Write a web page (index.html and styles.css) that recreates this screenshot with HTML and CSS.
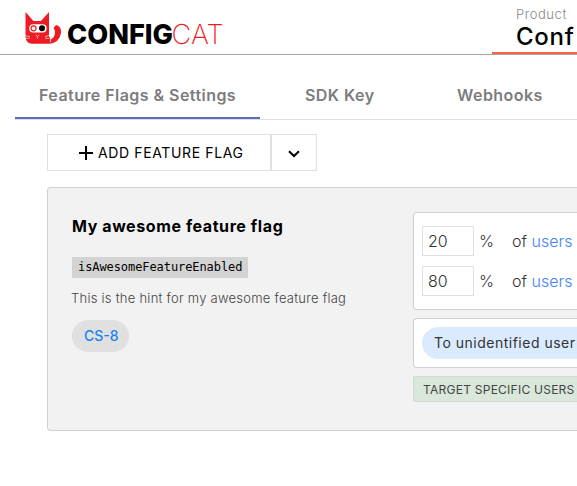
FILE: index.html
```html
<!DOCTYPE html>
<html lang="en">
<head>
<meta charset="utf-8">
<title>ConfigCat</title>
<link rel="stylesheet" href="styles.css">
</head>
<body>
<header class="header">
  <svg class="logo" width="200" height="40" viewBox="0 0 200 40">
    <path d="M0.5 4 L8.5 13 H16 L24 4 V28 L25.5 31.5 L24.5 35.7 H7 Q1 35.5 0.5 29 Z" fill="#ed1c24"/>
    <path d="M31 17 Q36.5 18 36 25 Q34.5 35 24 35.7 L25.5 31.3 Q29.5 30 30 25 Q30.2 22 28.5 20 Z" fill="#ed1c24"/>
    <path d="M24.6 27.5 Q26.6 30 25.4 34" fill="none" stroke="#fff" stroke-width=".8"/>
    <rect x="4.2" y="16.2" width="17.4" height="8.2" rx="4" fill="#fff"/>
    <circle cx="8.6" cy="20.3" r="2.5" fill="#fff" stroke="#ed1c24" stroke-width="1.2"/>
    <circle cx="17" cy="20.3" r="3" fill="#000"/>
    <path d="M10.6 27 L12.4 28.5 L14.2 27 M12.4 28.5 V30.5 M0 27.5 L5 28.6 M0 30.5 L5 30 M24 27.5 L20 28.6 M24 30.5 L20 30" fill="none" stroke="#fff" stroke-opacity=".75" stroke-width=".8"/>
    <text class="logo-config" x="42" y="35.6" textLength="106" lengthAdjust="spacingAndGlyphs">CONFIG</text>
    <text class="logo-cat" x="146.5" y="35.6" textLength="52" lengthAdjust="spacingAndGlyphs">CAT</text>
  </svg>
  <div class="product">
    <div class="product-label">Product</div>
    <div class="product-name">Conf</div>
  </div>
</header>
<nav class="tabs">
  <a class="tab tab-active">Feature Flags &amp; Settings</a>
  <a class="tab tab-sdk">SDK Key</a>
  <a class="tab tab-hooks">Webhooks</a>
</nav>
<main class="content">
  <div class="toolbar">
    <button class="button add">
      <svg width="14" height="14" viewBox="0 0 14 14"><path d="M7 0V14M0 7H14" stroke="#000" stroke-width="2"/></svg>
      <span>ADD FEATURE FLAG</span>
    </button>
    <button class="button more">
      <svg width="12" height="8" viewBox="0 0 12 8"><path d="M1 1.2L6 6L11 1.2" fill="none" stroke="#000" stroke-width="2"/></svg>
    </button>
  </div>
  <section class="card">
    <div class="details">
      <h2 class="title">My awesome feature flag</h2>
      <code class="key">isAwesomeFeatureEnabled</code>
      <p class="hint">This is the hint for my awesome feature flag</p>
      <a class="tag">CS-8</a>
    </div>
    <div class="rules">
      <div class="panel percents">
        <div class="row"><span class="field">20</span><span class="unit">%</span><span class="of">of <a class="link">users</a></span></div>
        <div class="row"><span class="field">80</span><span class="unit">%</span><span class="of">of <a class="link">users</a></span></div>
      </div>
      <div class="panel rest"><div class="pill">To unidentified user</div></div>
      <div class="target">TARGET SPECIFIC USERS</div>
    </div>
  </section>
</main>
</body>
</html>
```
FILE: styles.css
```css
* { box-sizing: border-box; }
body { margin: 0; background: #fff; color: #000; font-family: Inter, sans-serif; width: 577px; height: 486px; overflow: hidden; white-space: nowrap; }
.header { display: flex; height: 55px; border-bottom: 1px solid #a6a6a6; }
.logo { margin: 8px 0 0 25px; flex: none; overflow: visible; }
.logo-config { font: 800 27.5px Inter, sans-serif; fill: #000; }
.logo-cat { font: 200 27.5px Inter, sans-serif; fill: #ed1c24; }
.product { margin-left: 267px; padding: 7px 0 0 24px; width: 85px; height: 54px; flex: none; border-bottom: 2px solid #ff6347; }
.product-label { font-size: 13px; line-height: 15px; font-weight: 300; color: #888; letter-spacing: .55px; }
.product-name { font-size: 24px; line-height: 29px; font-weight: 550; letter-spacing: .7px; }
.tabs { display: flex; margin: 17px 0 0 15px; height: 48px; border-bottom: 1px solid #e0e0e0; }
.tab { height: 47px; line-height: 46px; font-size: 16px; font-weight: 600; color: #7c7c7c; letter-spacing: .45px; flex: none; }
.tab-active { width: 245px; padding-left: 24px; border-bottom: 2px solid #5c6bc0; }
.tab-sdk { width: 158px; padding-left: 45px; }
.tab-hooks { padding-left: 39px; }
.content { padding: 14px 0 0 47px; }
.toolbar { display: flex; }
.button { display: flex; align-items: center; height: 37px; background: #fff; border: 1px solid #e0e0e0; font: 400 14px Inter, sans-serif; color: #000; padding: 0; }
.add { width: 224px; padding-left: 31px; gap: 5px; letter-spacing: .63px; }
.more { width: 46px; justify-content: center; padding-top: 2px; }
.card { display: flex; margin-top: 16px; width: 530px; height: 244px; background: #f2f2f2; border: 1px solid #d0d0d0; border-right: 0; border-radius: 4px 0 0 4px; }
.details { width: 365px; padding: 28px 0 0 24px; flex: none; }
.title { margin: 0 0 20px; font-size: 16px; line-height: 21px; font-weight: 700; letter-spacing: .59px; }
.key { display: block; width: 176px; height: 21px; line-height: 21px; padding-left: 6px; background: #d3d3d3; font-family: "DejaVu Sans Mono", monospace; font-size: 12px; letter-spacing: -.08px; }
.hint { margin: 12px 0 13px -1px; font-size: 13px; line-height: 17px; font-weight: 300; color: #444; letter-spacing: .25px; }
.tag { display: block; width: 57px; height: 32px; line-height: 32px; padding-left: 12px; border-radius: 16px; background: #e0e0e0; color: #1a82f0; font-size: 14px; font-weight: 500; }
.rules { padding-top: 24px; width: 164px; flex: none; }
.panel { background: #fff; border: 1px solid #d0d0d0; border-right: 0; border-radius: 4px 0 0 4px; padding-left: 8px; }
.percents { height: 98px; padding-top: 13px; }
.row { display: flex; height: 30px; margin-bottom: 10px; font-size: 16px; line-height: 30px; font-weight: 300; color: #333; }
.field { width: 52px; height: 30px; padding-left: 5px; border: 1px solid #e0e0e0; line-height: 29px; }
.unit { width: 38px; padding-left: 5px; }
.link { color: #4285f4; }
.rest { margin-top: 8px; height: 50px; padding-top: 8px; }
.pill { height: 32px; line-height: 32px; padding-left: 12px; background: #dbebff; border-radius: 16px 0 0 16px; font-size: 14px; color: #333; letter-spacing: .5px; }
.target { margin-top: 8px; height: 26px; line-height: 25px; padding-left: 9px; border: 1px solid #d5d9d5; border-right: 0; border-radius: 2px 0 0 2px; background: #d9e8da; font-size: 12px; color: #444; letter-spacing: .25px; }
```
